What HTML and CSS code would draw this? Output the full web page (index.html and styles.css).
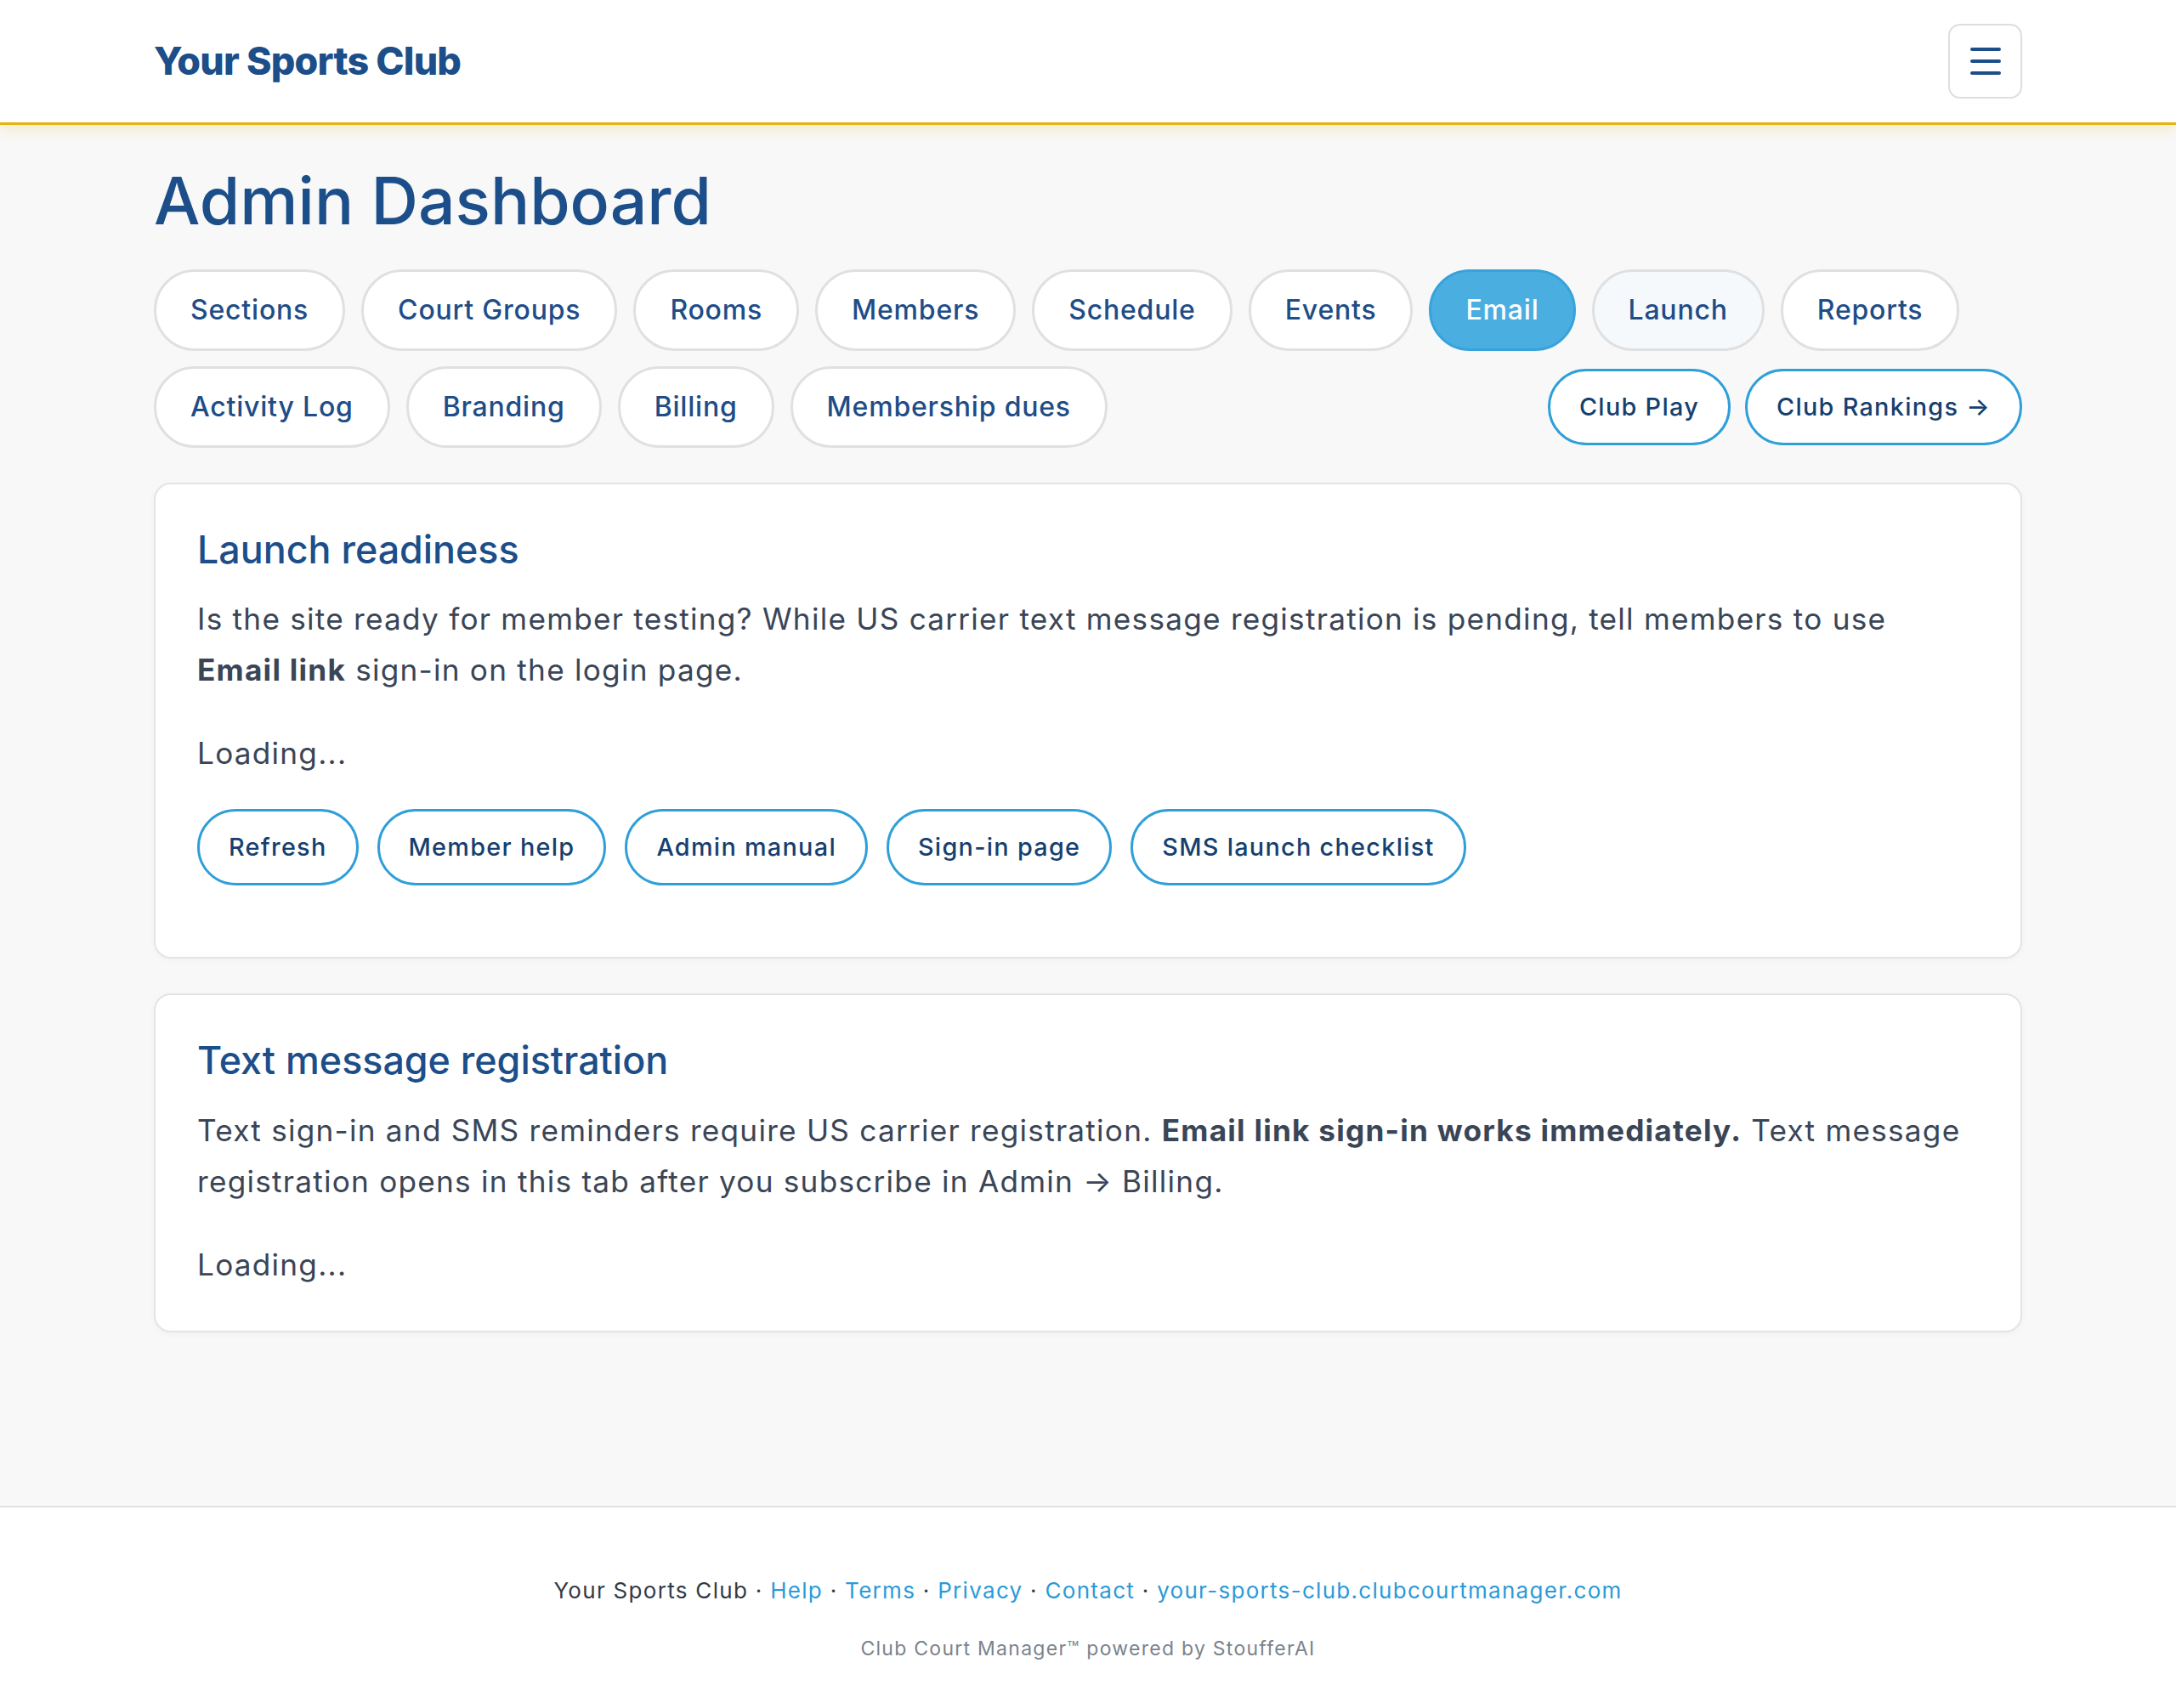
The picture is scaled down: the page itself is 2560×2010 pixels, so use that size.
FILE: index.html
```html
<!DOCTYPE html>
<html lang="en">
<head>
  <meta charset="UTF-8">
  <meta name="viewport" content="width=device-width, initial-scale=1.0">
  <title>Admin Dashboard - Your Sports Club</title>
  <link rel="stylesheet" href="styles.css">
</head>
<body>
  <header class="site-header">
    <div class="container header-inner">
      <a class="logo" href="#">Your Sports Club</a>
      <button class="menu-btn" aria-label="Menu">
        <svg width="36" height="32" viewBox="0 0 36 32">
          <path d="M2 2h32M2 16h32M2 30h32" stroke="#1c4e89" stroke-width="4" stroke-linecap="round"/>
        </svg>
      </button>
    </div>
  </header>

  <main class="container">
    <h1 class="page-title">Admin Dashboard</h1>

    <div class="tabs">
      <a class="tab" href="#">Sections</a>
      <a class="tab" href="#">Court Groups</a>
      <a class="tab" href="#">Rooms</a>
      <a class="tab" href="#">Members</a>
      <a class="tab" href="#">Schedule</a>
      <a class="tab" href="#">Events</a>
      <a class="tab active" href="#">Email</a>
      <a class="tab hover" href="#">Launch</a>
      <a class="tab" href="#">Reports</a>
      <a class="tab" href="#">Activity Log</a>
      <a class="tab" href="#">Branding</a>
      <a class="tab" href="#">Billing</a>
      <a class="tab" href="#">Membership dues</a>
      <div class="quick-links">
        <a class="btn-outline" href="#">Club Play</a>
        <a class="btn-outline" href="#">Club Rankings &rarr;</a>
      </div>
    </div>

    <section class="card">
      <h2>Launch readiness</h2>
      <p>Is the site ready for member testing? While US carrier text message registration is pending, tell members to use <strong>Email link</strong> sign-in on the login page.</p>
      <p class="loading">Loading...</p>
      <div class="actions">
        <a class="btn-outline" href="#">Refresh</a>
        <a class="btn-outline" href="#">Member help</a>
        <a class="btn-outline" href="#">Admin manual</a>
        <a class="btn-outline" href="#">Sign-in page</a>
        <a class="btn-outline" href="#">SMS launch checklist</a>
      </div>
    </section>

    <section class="card">
      <h2>Text message registration</h2>
      <p>Text sign-in and SMS reminders require US carrier registration. <strong>Email link sign-in works immediately.</strong> Text message registration opens in this tab after you subscribe in Admin &rarr; Billing.</p>
      <p class="loading">Loading...</p>
    </section>
  </main>

  <footer class="site-footer">
    <p class="footer-links">
      Your Sports Club &middot; <a href="#">Help</a> &middot; <a href="#">Terms</a> &middot; <a href="#">Privacy</a> &middot; <a href="#">Contact</a> &middot; <a href="#">your-sports-club.clubcourtmanager.com</a>
    </p>
    <p class="powered">Club Court Manager&trade; powered by StoufferAI</p>
  </footer>
</body>
</html>
```

FILE: styles.css
```css
body {
  margin: 0;
  min-height: 100vh;
  display: flex;
  flex-direction: column;
  background-color: #f8f8f8;
  font-family: Inter, "Open Sans", sans-serif;
  color: #3a4556;
}

a {
  text-decoration: none;
}

.container {
  width: 2198px;
  margin: 0 auto;
}

/* header */
.site-header {
  background: #fff;
  border-bottom: 3px solid #e8b10f;
  box-shadow: 0 4px 18px rgba(232, 177, 15, 0.22);
}

.header-inner {
  height: 144px;
  display: flex;
  align-items: center;
  justify-content: space-between;
}

.logo {
  font-size: 44.8px;
  font-weight: 800;
  color: #1c4e89;
  letter-spacing: -0.8px;
}

.menu-btn {
  width: 87px;
  height: 88px;
  border: 2px solid #dedede;
  border-radius: 14px;
  background: #fff;
  display: flex;
  align-items: center;
  justify-content: center;
  padding: 0;
}

/* main */
main {
  flex: 1;
  padding-bottom: 120px;
}

.page-title {
  font-size: 76.8px;
  font-weight: 500;
  line-height: 1.2;
  color: #1c4e89;
  margin: 44px 0 34px;
}

.tabs {
  display: flex;
  flex-wrap: wrap;
  gap: 18px 19px;
}

.tab {
  display: inline-block;
  padding: 21px 40px;
  line-height: 48px;
  font-size: 32px;
  font-weight: 500;
  letter-spacing: 0.025em;
  color: #1e4d87;
  background: #fff;
  border: 3px solid #dfe0e1;
  border-radius: 999px;
}

.tab.active {
  background: #4aaee0;
  border-color: #38a2db;
  color: #fff;
}

.tab.hover {
  background: #f5f9fc;
}

.quick-links {
  margin-left: auto;
  display: flex;
  gap: 17px;
  align-items: center;
}

.btn-outline {
  display: inline-block;
  padding: 20px 34px;
  line-height: 44px;
  font-size: 28.8px;
  font-weight: 500;
  letter-spacing: 0.045em;
  color: #15406f;
  background: #fff;
  border: 3px solid #2e9fd8;
  border-radius: 999px;
}

.card {
  background: #fff;
  border: 2px solid #e4e4e4;
  border-radius: 20px;
  box-shadow: 0 2px 8px rgba(0, 0, 0, 0.03);
  padding: 48px 49px;
  margin-top: 41px;
}

.card h2 {
  font-size: 44.8px;
  font-weight: 500;
  line-height: 1.3;
  color: #1c4e89;
  margin: 0 0 22px;
}

.card p {
  font-size: 35.2px;
  line-height: 60px;
  letter-spacing: 0.035em;
  margin: 0 0 38px;
}

.card strong {
  font-weight: 700;
}

.card .loading {
  margin: 0;
}

.actions {
  display: flex;
  gap: 22px;
  margin: 36px 0 36px;
}

/* footer */
.site-footer {
  background: #fff;
  border-top: 2px solid #e2e2e2;
  text-align: center;
  padding: 77px 0 52px;
}

.footer-links {
  margin: 0 0 30px;
  font-size: 26px;
  line-height: 41px;
  letter-spacing: 0.05em;
  color: #333a45;
}

.footer-links a {
  color: #2a9bd8;
}

.powered {
  margin: 0;
  font-size: 23px;
  line-height: 36px;
  letter-spacing: 0.055em;
  color: #7b838d;
}
```
